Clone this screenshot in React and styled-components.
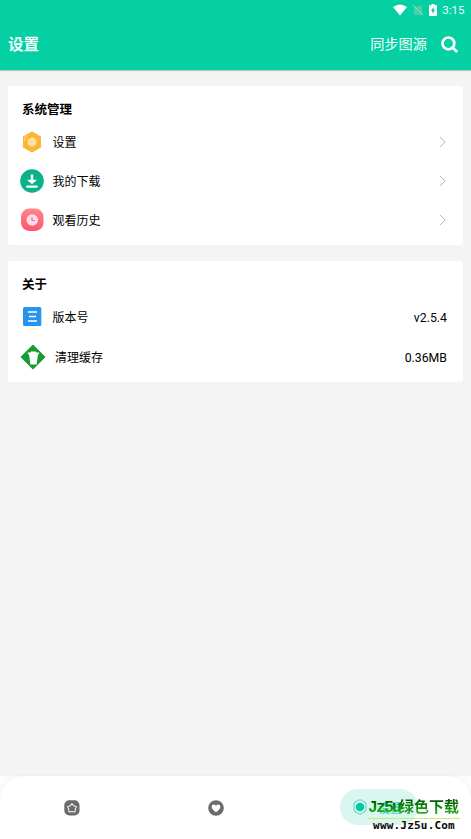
import React from "react";
import styled, { createGlobalStyle } from "styled-components";

const GlobalStyle = createGlobalStyle`
  * { box-sizing: border-box; }
  body { margin: 0; background: #f4f4f4; font-family: Roboto, "Noto Sans CJK SC", sans-serif; color: #000; }
  svg { display: block; flex: none; }
`;

const Screen = styled.div`
  width: 471px;
  height: 839px;
  display: flex;
  flex-direction: column;
  overflow: hidden;
`;

const Header = styled.header`
  height: 70px;
  flex: none;
  background: #04d0a3;
  color: #f2fffb;
  box-shadow: 0 1px 1px rgba(0, 0, 0, 0.2);
`;

const StatusBar = styled.div`
  height: 19px;
  display: flex;
  align-items: center;
  justify-content: flex-end;
  padding-right: 6.5px;
  font-size: 11.5px;
  line-height: 19px;
`;

const StatusIcons = styled.div`
  display: flex;
  align-items: center;
  gap: 6px;
  margin-right: 5px;
`;

const StatusTime = styled.span`
  padding-top: 1px;
`;

const AppBar = styled.div`
  height: 51px;
  display: flex;
  align-items: center;
  padding: 0 13px 0 8px;
`;

const PageTitle = styled.h1`
  margin: 0 auto 0 0;
  font-size: 15.6px;
  line-height: 24px;
  font-weight: 700;
`;

const SyncButton = styled.button`
  border: 0;
  padding: 0 0 2px;
  margin-right: 14px;
  background: none;
  color: inherit;
  font: 400 14.2px/22px Roboto, "Noto Sans CJK SC", sans-serif;
`;

const Content = styled.main`
  flex: 1;
  display: flex;
  flex-direction: column;
  gap: 16px;
  padding: 16px 8px 0;
`;

const Card = styled.section`
  height: ${(p) => p.$height}px;
  padding: 12px 16px 0 12px;
  background: #fff;
  border-radius: 3px;
`;

const CardTitle = styled.h2`
  margin: 0;
  padding-left: 2px;
  height: 24px;
  font-size: 12.5px;
  line-height: 23px;
  font-weight: 700;
`;

const Row = styled.div`
  height: ${(p) => p.$height || 39}px;
  display: flex;
  align-items: center;
  font-size: 12px;
  line-height: 20px;
`;

const IconSlot = styled.span`
  width: ${(p) => p.$width || 32.4}px;
  flex: none;
`;

const Label = styled.span`
  margin-right: auto;
  padding-top: 2px;
  font-weight: 400;
`;

const Value = styled.span`
  font-size: 12.3px;
  padding-top: 2px;
`;

const NavArea = styled.div`
  height: 63px;
  flex: none;
  background: #fcfcfc;
`;

const NavBar = styled.nav`
  height: 63px;
  display: grid;
  grid-template-columns: 143px 145px 1fr;
  align-items: center;
  background: #fff;
  border-radius: 24px 24px 0 0;
  box-shadow: 0 0 4px rgba(0, 0, 0, 0.06);
`;

const NavItem = styled.div`
  display: flex;
  justify-content: center;
`;

const ActiveArea = styled.div`
  position: relative;
  height: 63px;
  padding: 13px 0 0 52px;
`;

const ActivePill = styled.div`
  width: 78px;
  height: 36px;
  padding-left: 13px;
  display: flex;
  align-items: center;
  gap: 11px;
  border-radius: 18px;
  background: #d9f6f0;
  color: #3fd5ba;
  font-size: 12px;
  font-weight: 500;
`;

const Watermark = styled.div`
  position: absolute;
  left: 80px;
  top: 18px;
  width: 92px;
  text-align: center;
  white-space: nowrap;
`;

const WatermarkName = styled.div`
  height: 25px;
  display: flex;
  align-items: center;
  border-bottom: 1px solid #c5ed72;
  background: linear-gradient(#005c00 28%, #078007 50%, #2cae20 80%) padding-box text;
  color: transparent;
  font: 700 15px/24px "Noto Sans CJK SC", sans-serif;
`;

const LatinName = styled.span`
  width: 31px;
  flex: none;
  padding-top: 3px;
  text-align: left;
  font: 700 16.5px/22px "Liberation Mono", monospace;
  letter-spacing: -1.9px;
`;

const WatermarkUrl = styled.div`
  color: #080808;
  font: 700 11px/13px "DejaVu Sans Mono", monospace;
  letter-spacing: 0.2px;
`;

function Wifi() {
  return <svg width="14" height="12" viewBox="0 0 14 12"><path d="M0 3Q7-2 14 3L7 11.5Z" fill="#fff" /></svg>;
}

function NoSignal() {
  return (
    <svg width="10" height="12" viewBox="0 0 10 12">
      <path d="M1 11V3L9 1V11Z" fill="#4bcda5" />
      <path d="M0 1L10 11" stroke="#8bdcc3" />
    </svg>
  );
}

function Battery() {
  return (
    <svg width="8" height="12" viewBox="0 0 8 12">
      <path d="M2.5 0h3v1.2H8V12H0V1.2h2.5Z" fill="#fff" />
      <path d="M4.7 2.8L2 7h1.6v3L6 5.8H4.5Z" fill="#04bd94" />
    </svg>
  );
}

function SearchIcon() {
  return (
    <svg width="17" height="17" viewBox="0 0 17 17" fill="none" stroke="#fff" strokeWidth="2.7" strokeLinecap="round">
      <circle cx="7.4" cy="7.4" r="5.9" /><path d="M11.8 11.8L15.4 15.3" />
    </svg>
  );
}

function SettingsIcon() {
  return (
    <svg width="24" height="24" viewBox="0 0 24 24">
      <path d="M12 2.6L20 7.2V16.8L12 21.4L4 16.8V7.2Z" fill="#fcb531" stroke="#fcb531" strokeWidth="2" strokeLinejoin="round" />
      <path d="M4.6 11V7.6L7.5 6" fill="none" stroke="#ffdc91" />
      <path d="M12 8.1L15.4 10V14L12 15.9L8.6 14V10Z" fill="#ffe0a0" stroke="#ffe0a0" strokeWidth="2" strokeLinejoin="round" />
    </svg>
  );
}

function DownloadIcon() {
  return (
    <svg width="24" height="24" viewBox="0 0 24 24">
      <circle cx="12" cy="12" r="11.8" fill="#0bb285" />
      <path d="M10.8 5.4H13.2V10.8H17L12 15.2L7 10.8H10.8Z" fill="#fff" />
      <path d="M7.2 17.7H16.8" stroke="#fff" strokeWidth="2.2" strokeLinecap="round" />
    </svg>
  );
}

function HistoryIcon() {
  return (
    <svg width="24" height="24" viewBox="0 0 24 24">
      <defs><linearGradient id="history" x2="0" y2="1"><stop stopColor="#ff8789" /><stop offset="1" stopColor="#f9556c" /></linearGradient></defs>
      <rect x="1" y="0.5" width="22.5" height="22.5" rx="8.5" fill="url(#history)" />
      <circle cx="12.3" cy="12" r="5.8" fill="#ffdde4" />
      <path d="M12 9V12.5H15" fill="none" stroke="#ed6eb5" strokeWidth="1.2" />
    </svg>
  );
}

function VersionIcon() {
  return (
    <svg width="24" height="24" viewBox="0 0 24 24">
      <rect x="3" y="2" width="18.3" height="19" rx="1.5" fill="#2693ec" />
      <path d="M8 7H17M9 11.5H16M8 16H17" stroke="#fff" strokeWidth="1.6" />
    </svg>
  );
}

function CacheIcon() {
  return (
    <svg width="26" height="26" viewBox="0 0 26 26">
      <path d="M13 1.5L24.5 13L13 24.5L1.5 13Z" fill="#179c31" stroke="#179c31" strokeWidth="1.5" strokeLinejoin="round" />
      <path d="M7.8 10.2V8.4H10.3L11.2 7.4H15.6L16.5 8.4H19V10.2H18L16.6 20.5H10.4L9 10.2Z" fill="#fff" />
    </svg>
  );
}

function Chevron() {
  return <svg width="9" height="12" viewBox="0 0 9 12"><path d="M2 1L7.2 6L2 11" fill="none" stroke="#b9b9b9" strokeWidth="1" /></svg>;
}

function StarNavIcon() {
  return (
    <svg width="16" height="16" viewBox="0 0 16 16">
      <rect x=".3" y=".3" width="15.2" height="15.2" rx="5" fill="#6b6b6b" />
      <path d="M8 3.6L9.8 5.8L12.5 6.8L11.3 9.1L11 12L8 11.5L5 12L4.7 9.1L3.5 6.8L6.2 5.8Z" fill="none" stroke="#f1f1f1" strokeWidth="1.1" strokeLinejoin="round" />
    </svg>
  );
}

function HeartNavIcon() {
  return (
    <svg width="16" height="16" viewBox="0 0 16 16">
      <circle cx="8" cy="8" r="7.8" fill="#6b6b6b" />
      <path d="M8 12.2C5.5 10.4 3.7 8.8 3.7 6.7C3.7 4.4 6.4 3.7 8 5.7C9.6 3.7 12.3 4.4 12.3 6.7C12.3 8.8 10.5 10.4 8 12.2Z" fill="#fff" />
    </svg>
  );
}

function ActiveSettingsIcon() {
  return (
    <svg width="14" height="16" viewBox="0 0 14 16">
      <path d="M4 2L5.6 1H8.4L10 2.5L12 3L13 5V11L11.5 13L9.5 13.5L8.4 15H5.6L4 13.5L2 13L1 11V5L2 3Z" fill="none" stroke="#46d4b9" />
      <circle cx="7" cy="8" r="4.3" fill="#04c7a5" />
    </svg>
  );
}

export default function App() {
  return (
    <Screen>
      <GlobalStyle />
      <Header>
        <StatusBar><StatusIcons><Wifi /><NoSignal /><Battery /></StatusIcons><StatusTime>3:15</StatusTime></StatusBar>
        <AppBar><PageTitle>设置</PageTitle><SyncButton>同步图源</SyncButton><SearchIcon /></AppBar>
      </Header>
      <Content>
        <Card $height={159}>
          <CardTitle>系统管理</CardTitle>
          <Row><IconSlot><SettingsIcon /></IconSlot><Label>设置</Label><Chevron /></Row>
          <Row><IconSlot><DownloadIcon /></IconSlot><Label>我的下载</Label><Chevron /></Row>
          <Row><IconSlot><HistoryIcon /></IconSlot><Label>观看历史</Label><Chevron /></Row>
        </Card>
        <Card $height={121}>
          <CardTitle>关于</CardTitle>
          <Row $height={40}><IconSlot><VersionIcon /></IconSlot><Label>版本号</Label><Value>v2.5.4</Value></Row>
          <Row $height={39}><IconSlot $width={35}><CacheIcon /></IconSlot><Label>清理缓存</Label><Value>0.36MB</Value></Row>
        </Card>
      </Content>
      <NavArea>
        <NavBar>
          <NavItem><StarNavIcon /></NavItem>
          <NavItem><HeartNavIcon /></NavItem>
          <ActiveArea>
            <ActivePill><ActiveSettingsIcon />设置</ActivePill>
            <Watermark>
              <WatermarkName><LatinName>Jz5u</LatinName>绿色下载</WatermarkName>
              <WatermarkUrl>www.Jz5u.Com</WatermarkUrl>
            </Watermark>
          </ActiveArea>
        </NavBar>
      </NavArea>
    </Screen>
  );
}
